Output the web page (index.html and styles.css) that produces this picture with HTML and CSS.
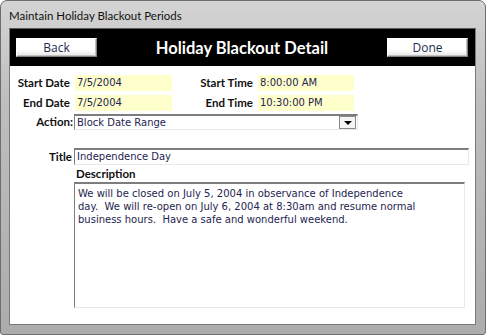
FILE: index.html
```html
<!DOCTYPE html>
<html lang="en">
<head>
    <meta charset="UTF-8">
    <title>Maintain Holiday Blackout Periods</title>
    <link rel="stylesheet" href="styles.css">
</head>
<body>
    <div class="window">
        <div class="titlebar">Maintain Holiday Blackout Periods</div>
        <div class="client">
            <div class="header">
                <button class="btn">Back</button>
                <h1>Holiday Blackout Detail</h1>
                <button class="btn">Done</button>
            </div>
            <div class="form">
                <div class="dates">
                    <label>Start Date</label>
                    <div class="field">7/5/2004</div>
                    <label>Start Time</label>
                    <div class="field">8:00:00 AM</div>
                    <label>End Date</label>
                    <div class="field">7/5/2004</div>
                    <label>End Time</label>
                    <div class="field">10:30:00 PM</div>
                </div>
                <div class="row action-row">
                    <label>Action:</label>
                    <div class="combo">
                        <span>Block Date Range</span>
                        <span class="drop"><span class="arrow"></span></span>
                    </div>
                </div>
                <div class="row title-row">
                    <label>Title</label>
                    <div class="input">Independence Day</div>
                </div>
                <div class="desc-label">Description</div>
                <div class="textarea">We will be closed on July 5, 2004 in observance of Independence<br>day.&nbsp; We will re-open on July 6, 2004 at 8:30am and resume normal<br>business hours.&nbsp; Have a safe and wonderful weekend.</div>
            </div>
        </div>
    </div>
</body>
</html>
```

FILE: styles.css
```css
body {
    margin: 0;
    padding: 0;
    background: #ffffff;
    font-family: "DejaVu Sans", sans-serif;
}
.window {
    width: 486px;
    height: 335px;
    box-sizing: border-box;
    padding: 0 9px 9px 8px;
    border: 1px solid #6e6e6e;
    border-radius: 7px 7px 3px 3px;
    background: linear-gradient(180deg, #d4d4d4 0%, #bebebe 30%, #acacac 100%);
    display: flex;
    flex-direction: column;
}
.titlebar {
    height: 27px;
    box-sizing: border-box;
    padding: 7px 0 0 0;
    font-family: "Lato", sans-serif;
    font-size: 11.5px;
    line-height: 16px;
    color: #111111;
}
.client {
    flex: 1;
    background: #ffffff;
    border: 1px solid #7a7a7a;
    border-top-color: #5a5a5a;
}
.header {
    background: #000000;
    height: 37px;
    box-sizing: border-box;
    padding: 0 7px 0 6px;
    display: flex;
    align-items: center;
    justify-content: space-between;
}
.header h1 {
    margin: 0;
    color: #ffffff;
    font-family: "Lato", sans-serif;
    font-size: 16.5px;
    font-weight: bold;
}
.btn {
    width: 81px;
    height: 19px;
    padding: 0;
    font-family: "Open Sans", sans-serif;
    font-size: 12px;
    color: #1d2a4f;
    background: linear-gradient(180deg, #ffffff 0%, #ffffff 60%, #e6e6e6 100%);
    border: 1px solid;
    border-color: #ffffff #808080 #808080 #ffffff;
    box-shadow: inset -1px -1px 0 #c0c0c0;
}
.form {
    padding: 9px 0 0 0;
    font-size: 10px;
    color: #000000;
}
.dates {
    display: grid;
    grid-template-columns: 60px 97px 76px 96px;
    column-gap: 5px;
    row-gap: 4px;
}
label, .desc-label {
    font-family: "Lato", sans-serif;
    font-weight: bold;
    font-size: 11.5px;
    line-height: 16px;
    color: #111111;
}
label {
    text-align: right;
}
.field {
    background: #ffffcc;
    height: 16px;
    line-height: 16px;
    padding-left: 2px;
    color: #1e2550;
}
.row {
    display: flex;
    align-items: center;
}
.action-row {
    margin-top: 3px;
}
.action-row label {
    width: 63px;
    margin-right: 1px;
}
.combo, .input, .textarea {
    box-sizing: border-box;
    border: 1px solid;
    border-color: #7d7d7d #e9e9e9 #e9e9e9 #7d7d7d;
    border-top-width: 2px;
    color: #1e2550;
}
.combo {
    width: 284px;
    height: 16px;
    display: flex;
    align-items: center;
    justify-content: space-between;
    padding-left: 2px;
}
.drop {
    width: 17px;
    height: 13px;
    box-sizing: border-box;
    border: 1px solid #8a8a8a;
    background: #f4f4f4;
    margin-right: 1px;
    display: flex;
    align-items: center;
    justify-content: center;
}
.arrow {
    width: 0;
    height: 0;
    border-left: 4px solid transparent;
    border-right: 4px solid transparent;
    border-top: 4px solid #000000;
    margin-top: 1px;
}
.title-row {
    margin-top: 18px;
}
.title-row label {
    width: 62px;
    margin-right: 2px;
}
.input {
    width: 395px;
    height: 17px;
    line-height: 14px;
    padding-left: 2px;
}
.desc-label {
    margin: 1px 0 0 66px;
}
.textarea {
    width: 391px;
    height: 126px;
    margin-left: 64px;
    padding: 3px 0 0 3px;
    line-height: 13px;
    white-space: nowrap;
}
```
